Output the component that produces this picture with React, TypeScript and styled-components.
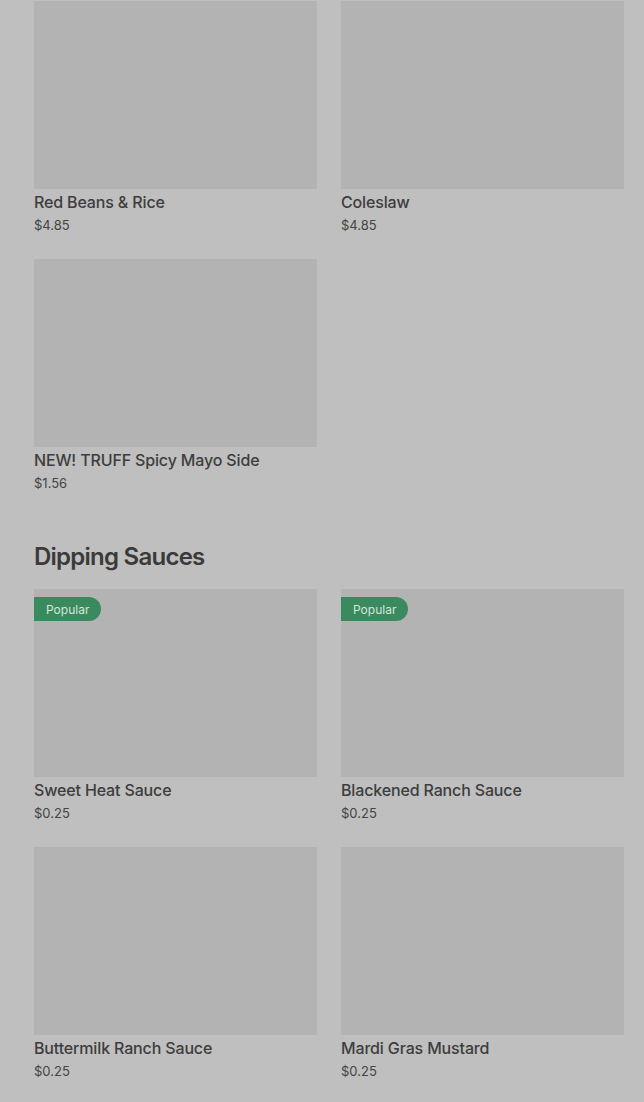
import React from "react";
import styled, {createGlobalStyle} from "styled-components";

const GlobalStyle = createGlobalStyle`
  html, body {
    margin: 0;
    padding: 0;
    background: #bfbfbf;
  }
  body {
    font-family: Inter, Roboto, "Liberation Sans", sans-serif;
    color: #3d3d3d;
    overflow: hidden;
  }
`;

type Item = {
    name: string;
    price: string;
    popular?: boolean;
};

const sides: Item[] = [
    {name: "Red Beans & Rice", price: "$4.85"},
    {name: "Coleslaw", price: "$4.85"},
    {name: "NEW! TRUFF Spicy Mayo Side", price: "$1.56"},
];

const sauces: Item[] = [
    {name: "Sweet Heat Sauce", price: "$0.25", popular: true},
    {name: "Blackened Ranch Sauce", price: "$0.25", popular: true},
    {name: "Buttermilk Ranch Sauce", price: "$0.25"},
    {name: "Mardi Gras Mustard", price: "$0.25"},
];

const StyledPage = styled.div`
  padding: 1px 20px 0 34px;
  height: 1102px;
  box-sizing: border-box;
`;

const StyledSection = styled.section`
  & + & {
    margin-top: 48px;
  }
`;

const StyledHeading = styled.h2`
  margin: 0 0 16px;
  font-size: 24px;
  line-height: 32px;
  font-weight: 600;
  letter-spacing: -0.75px;
  color: #3a3a3a;
`;

const StyledGrid = styled.div`
  display: grid;
  grid-template-columns: repeat(2, 283px);
  column-gap: 24px;
  row-gap: 24px;
`;

const StyledCard = styled.div`
  display: flex;
  flex-direction: column;
`;

const StyledImage = styled.div`
  position: relative;
  height: 188px;
  background: #b3b3b3;
`;

const StyledBadge = styled.span`
  position: absolute;
  top: 8px;
  left: 0;
  height: 24px;
  padding: 0 12px;
  display: flex;
  align-items: center;
  background: #3b8a5f;
  color: #d4e6da;
  font-size: 12px;
  border-radius: 0 12px 12px 0;
`;

const StyledName = styled.div`
  margin-top: 2px;
  font-size: 16px;
  line-height: 22px;
  font-weight: 500;
  letter-spacing: -0.15px;
  color: #3d3d3d;
`;

const StyledPrice = styled.div`
  margin-top: 2px;
  font-size: 13px;
  line-height: 20px;
  color: #444;
`;

function MenuCard({item}: {item: Item}) {
    return (
        <StyledCard>
            <StyledImage>
                {item.popular && <StyledBadge>Popular</StyledBadge>}
            </StyledImage>
            <StyledName>{item.name}</StyledName>
            <StyledPrice>{item.price}</StyledPrice>
        </StyledCard>
    );
}

export default function App() {
    return (
        <>
            <GlobalStyle/>
            <StyledPage>
                <StyledSection>
                    <StyledGrid>
                        {sides.map(item => <MenuCard key={item.name} item={item}/>)}
                    </StyledGrid>
                </StyledSection>
                <StyledSection>
                    <StyledHeading>Dipping Sauces</StyledHeading>
                    <StyledGrid>
                        {sauces.map(item => <MenuCard key={item.name} item={item}/>)}
                    </StyledGrid>
                </StyledSection>
            </StyledPage>
        </>
    );
}
